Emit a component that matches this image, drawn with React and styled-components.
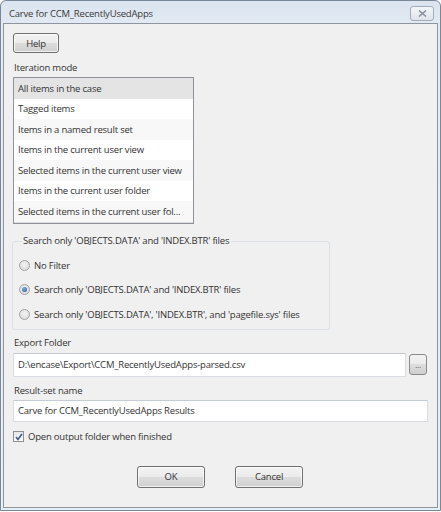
import React from "react";
import styled, { createGlobalStyle } from "styled-components";

const Global = createGlobalStyle`
  html, body {
    margin: 0;
    padding: 0;
    background: #ffffff;
  }
  body {
    font-family: "Open Sans", "Noto Sans", sans-serif;
    font-size: 9.5px;
    letter-spacing: -0.2px;
    color: #333;
  }
`;

const Window = styled.div`
  width: 439px;
  height: 509px;
  border: 1px solid #7a8796;
  border-radius: 6px 6px 0 0;
  background: linear-gradient(#dbe4ef, #e4ebf4 30px, #e8eef5);
  display: flex;
  flex-direction: column;
`;

const TitleBar = styled.div`
  height: 22px;
  display: flex;
  align-items: center;
  justify-content: space-between;
  padding: 0 6px 0 8px;
  flex: none;
`;

const Title = styled.span`
  color: #3a3a3a;
  margin-top: 2px;
`;

const CloseBtn = styled.div`
  width: 22px;
  height: 13px;
  margin-top: 2px;
  border: 1px solid #a3acb8;
  border-radius: 3px;
  background: linear-gradient(#f4f6f9, #dfe4ea);
  display: flex;
  align-items: center;
  justify-content: center;
`;

const Client = styled.div`
  flex: 1;
  margin: 0 2px 2px 2px;
  border: 1px solid #8e959e;
  background: #f0f0f0;
  padding: 9px 9px 0 9px;
  display: flex;
  flex-direction: column;
`;

const Button = styled.button`
  font-family: inherit;
  font-size: 9.5px;
  letter-spacing: -0.2px;
  color: #333;
  width: ${(p) => p.w || 68}px;
  height: ${(p) => p.h || 22}px;
  padding: 0;
  border: 1px solid #707070;
  border-radius: 3px;
  background: linear-gradient(#f2f2f2 0%, #ebebeb 49%, #dddddd 50%, #cfcfcf 100%);
  box-shadow: inset 0 0 0 1px rgba(255, 255, 255, 0.7);
  flex: none;
`;

const Label = styled.div`
  line-height: 14px;
  margin: ${(p) => p.m || "0"};
  padding-left: 1px;
`;

const List = styled.div`
  width: 179px;
  height: 145px;
  border: 1px solid #8f9399;
  background: #fff;
  margin-top: 2px;
  display: flex;
  flex-direction: column;
  overflow: hidden;
  flex: none;
`;

const Row = styled.div`
  height: 20.5px;
  flex: none;
  display: flex;
  align-items: center;
  padding-left: 4px;
  white-space: nowrap;
  background: ${(p) => (p.selected ? "#e4e4e4" : p.alt ? "#f8f8f8" : "#ffffff")};
  border-bottom: ${(p) => (p.last ? "1px solid #dcdcdc" : "none")};
`;

const Group = styled.fieldset`
  width: 318px;
  box-sizing: border-box;
  margin: 10px 0 0 -1px;
  padding: 5px 0 2px 6px;
  border: 1px solid #d9e1e6;
  border-radius: 3px;
  display: flex;
  flex-direction: column;
  flex: none;
`;

const Legend = styled.legend`
  line-height: 14px;
  padding: 0 2px 0 1px;
  margin-left: 3px;
`;

const RadioRow = styled.label`
  height: 24.5px;
  display: flex;
  align-items: center;
  gap: 4px;
  white-space: nowrap;
`;

const RadioCircle = styled.span`
  width: 11px;
  height: 11px;
  border-radius: 50%;
  border: 1px solid #a2a2a2;
  background: radial-gradient(circle at 50% 40%, #f4f4f4, #d6d6d6);
  display: flex;
  align-items: center;
  justify-content: center;
  box-sizing: border-box;
  flex: none;
  &::after {
    content: "";
    display: ${(p) => (p.checked ? "block" : "none")};
    width: 5px;
    height: 5px;
    border-radius: 50%;
    background: radial-gradient(circle at 40% 35%, #7fb3e6, #1d4f8c);
  }
`;

const FieldRow = styled.div`
  display: flex;
  align-items: center;
  gap: 3px;
`;

const Input = styled.div`
  height: ${(p) => p.h || 24}px;
  box-sizing: border-box;
  flex: 1;
  border: 1px solid #d9dde2;
  border-top-color: #c6ccd3;
  background: #fff;
  display: flex;
  align-items: center;
  padding-left: 4px;
  white-space: nowrap;
`;

const Browse = styled.div`
  width: 18px;
  height: 21px;
  box-sizing: border-box;
  border: 1px solid #8a8a8a;
  border-radius: 3px;
  background: linear-gradient(#f2f2f2 0%, #ebebeb 49%, #dddddd 50%, #cfcfcf 100%);
  display: flex;
  align-items: flex-end;
  justify-content: center;
  padding-bottom: 5px;
  font-size: 8px;
  line-height: 8px;
  color: #555;
  margin-right: 1px;
`;

const CheckRow = styled.label`
  display: flex;
  align-items: center;
  gap: 4px;
  margin-top: 9px;
  height: 12px;
`;

const CheckBox = styled.span`
  width: 11px;
  height: 11px;
  box-sizing: border-box;
  border: 1px solid #8e8f8f;
  background: linear-gradient(#e6e6e6, #fbfbfb);
  display: flex;
  align-items: center;
  justify-content: center;
  flex: none;
`;

const Footer = styled.div`
  display: flex;
  justify-content: center;
  gap: 30px;
  margin-top: 23px;
  padding-right: 1px;
`;

const items = [
  "All items in the case",
  "Tagged items",
  "Items in a named result set",
  "Items in the current user view",
  "Selected items in the current user view",
  "Items in the current user folder",
  "Selected items in the current user fol...",
];

const radios = [
  { text: "No Filter" },
  { text: "Search only 'OBJECTS.DATA' and 'INDEX.BTR' files", checked: true },
  { text: "Search only 'OBJECTS.DATA', 'INDEX.BTR', and 'pagefile.sys' files" },
];

export default function App() {
  return (
    <>
      <Global />
      <Window>
        <TitleBar>
          <Title>Carve for CCM_RecentlyUsedApps</Title>
          <CloseBtn>
            <svg width="9" height="7" viewBox="0 0 9 7">
              <path d="M1 0.5L8 6.5M8 0.5L1 6.5" stroke="#8a929c" strokeWidth="1.6" />
            </svg>
          </CloseBtn>
        </TitleBar>
        <Client>
          <Button w={46} h={20}>Help</Button>
          <Label m="8px 0 0 0">Iteration mode</Label>
          <List>
            {items.map((t, i) => (
              <Row
                key={t}
                selected={i === 0}
                alt={i % 2 === 0}
                last={i === items.length - 1}
              >
                {t}
              </Row>
            ))}
          </List>
          <Group>
            <Legend>Search only 'OBJECTS.DATA' and 'INDEX.BTR' files</Legend>
            {radios.map((r) => (
              <RadioRow key={r.text}>
                <RadioCircle checked={r.checked} />
                {r.text}
              </RadioRow>
            ))}
          </Group>
          <Label m="6px 0 3px 0">Export Folder</Label>
          <FieldRow>
            <Input>D:\encase\Export\CCM_RecentlyUsedApps-parsed.csv</Input>
            <Browse>...</Browse>
          </FieldRow>
          <Label m="7px 0 2px 0">Result-set name</Label>
          <FieldRow>
            <Input h={22}>Carve for CCM_RecentlyUsedApps Results</Input>
          </FieldRow>
          <CheckRow>
            <CheckBox>
              <svg width="8" height="8" viewBox="0 0 8 8">
                <path d="M1 4L3 6.5L7 1" fill="none" stroke="#3d5a98" strokeWidth="1.6" />
              </svg>
            </CheckBox>
            Open output folder when finished
          </CheckRow>
          <Footer>
            <Button w={68} h={22}>OK</Button>
            <Button w={68} h={22}>Cancel</Button>
          </Footer>
        </Client>
      </Window>
    </>
  );
}
